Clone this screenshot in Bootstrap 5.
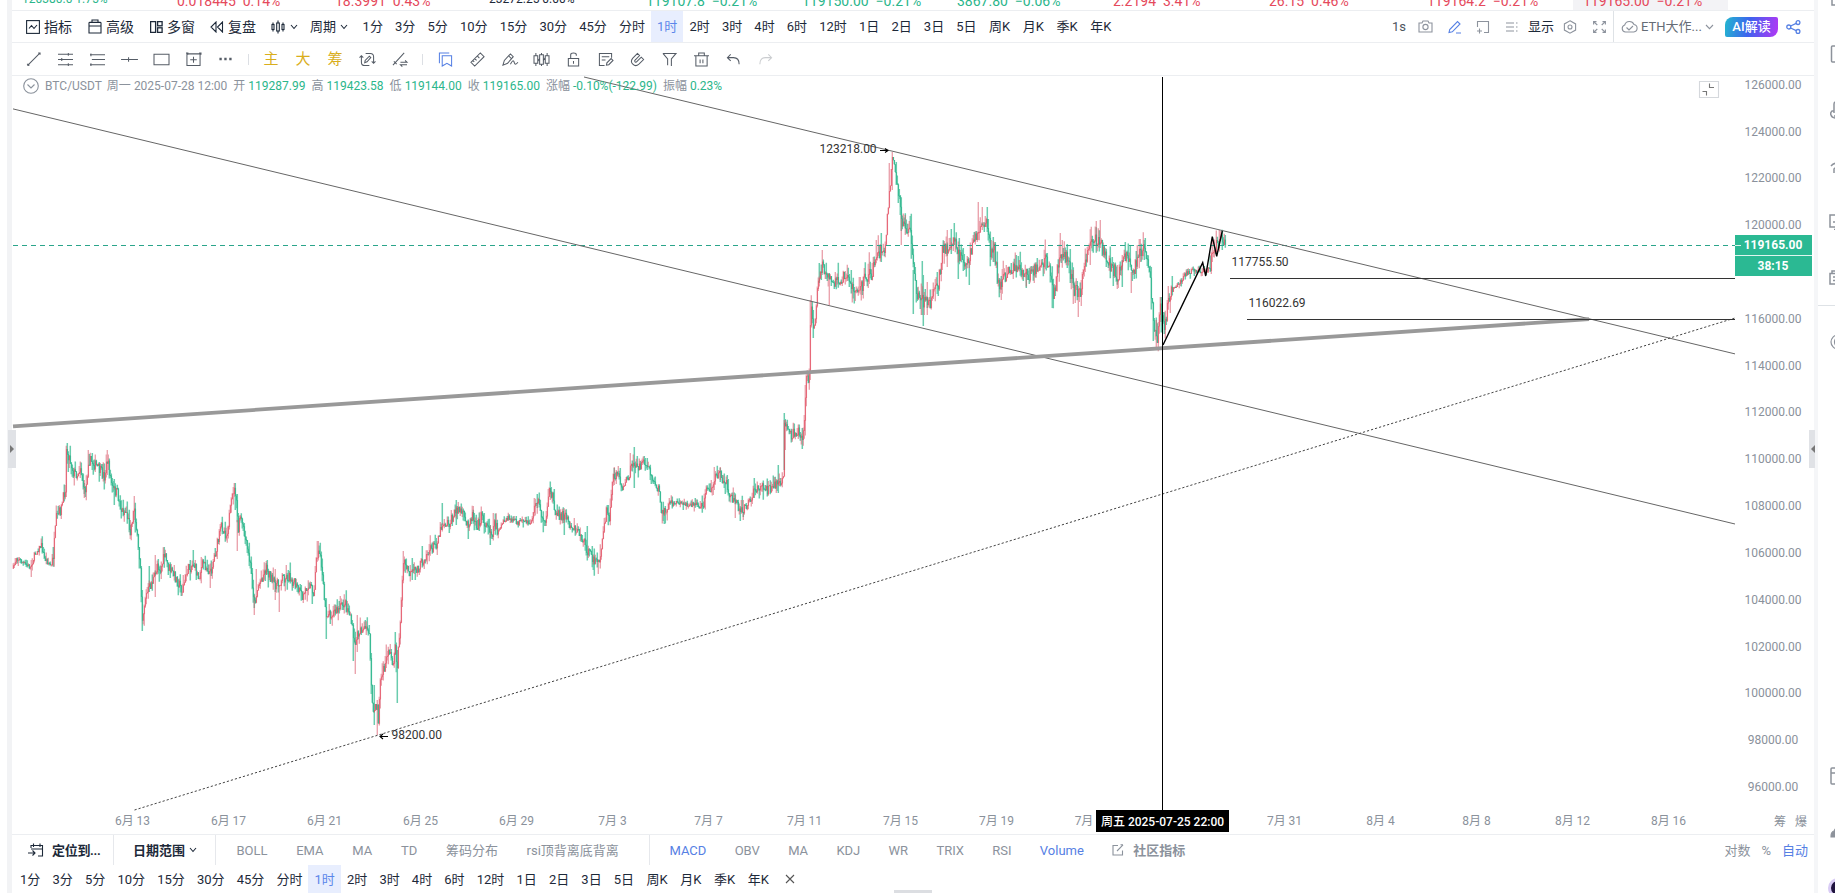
<!DOCTYPE html>
<html lang="zh-CN">
<head>
    <meta charset="UTF-8">
    <meta name="viewport" content="width=device-width, initial-scale=1.0">
    <title>BTC/USDT 1时</title>
    <link href="https://cdn.jsdelivr.net/npm/bootstrap@5.3.0/dist/css/bootstrap.min.css" rel="stylesheet">
    <style>
        body { width: 1835px; height: 893px; overflow: hidden; font-family: Roboto, "Noto Sans CJK SC", sans-serif; font-size: 13px; line-height: 1; color: #1d2939; background: #fff; }
        svg { flex: none; fill: none; stroke: currentColor; display: block; }
        body { stroke-width: 1.1; }
        .gutter { width: 12px; border-left: 7px solid #fff; background: #f2f3f5; }
        .main-pane { width: 1802px; flex: none; }
        .main-pane > div { flex: none; }
        .right-strip { width: 4px; background: #f5f6f8; }
        .side-bar { width: 17px; color: #8d929b; }
        .line-b { border-bottom: 1px solid #eceef1; }
        .up { color: #e5495c; }
        .down { color: #2bb68b; }
        .muted { color: #8b929c; }
        .blue { color: #5680e4; }

        .ticker { height: 11px; overflow: hidden; padding-left: 10px; }
        .ticker span { flex: none; font-size: 14px; line-height: 14px; margin-top: -6px; white-space: pre; }
        .ticker .tiny { font-size: 12px; margin-top: -8px; }
        .ticker .picked { background: #f3f3f6; margin-left: -10px; padding-left: 10px; height: 17px; }

        .bar-top { height: 32px; }
        .bar-top .tool { font-size: 14px; }
        .period { height: 100%; padding: 0 6.07px; }
        .period.wide { padding: 0 6.3px; }
        .period.on { background: #e8eefe; color: #5b86ea; }
        .tool-gray { color: #8d939d; }
        .ai-btn { width: 53px; height: 20px; border-radius: 8px 2px 8px 2px; color: #fff; font-weight: 500; background: linear-gradient(100deg, #22b7cf, #3d63ee 45%, #b436f5); }
        .bar-draw { height: 33px; padding-left: 5px; color: #555c66; }
        .bar-draw .cell { width: 32px; }
        .bar-draw .split { width: 14px; }
        .bar-draw .split::after { content: ""; display: block; width: 1px; height: 11px; background: #dcdfe4; }
        .bar-draw .gold { color: #d9ae1c; font-size: 15px; }

        .chart-box { height: 759px; }
        .info { left: 11px; top: 2px; font-size: 12px; height: 16px; }
        .info .down { margin: 0 6px 0 3px; }
        .handle { width: 8px; height: 38px; background: #e0e2e6; color: #777; top: 354px; }
        .handle svg { fill: currentColor; stroke: none; }
        .handle.start { left: -4px; }
        .handle.end { right: -1px; width: 6px; }
        .handle-bottom { left: 894px; top: 890px; width: 38px; height: 4px; background: #dcdee2; }
        .bar-ind { height: 30px; }
        .bar-ind .box { border-right: 1px solid #e6e8ec; height: 100%; }
        .bar-period { height: 28px; padding-left: 2px; }
        .side-bar .slot { height: 56px; padding-left: 12px; overflow: hidden; }

        .axis text { font-size: 12px; fill: #8a919b; stroke: none; text-anchor: middle; }
        .plain text { font-size: 12px; fill: #333; stroke: none; }
    </style>
</head>
<body class="d-flex">
    <div class="gutter flex-shrink-0"></div>

    <main class="main-pane d-flex flex-column">
        <div class="ticker line-b d-flex" id="ticker"></div>

        <div class="bar-top line-b d-flex align-items-center">
            <div class="tool d-flex align-items-center" style="margin-left:14px">
                <svg width="14" height="14" viewBox="0 0 14 14"><rect x=".6" y=".6" width="12.8" height="12.8"/><path d="M3 8.500 5.500 5.500 8 8.500 11 5"/></svg>
                <span class="ms-1">指标</span>
            </div>
            <div class="tool d-flex align-items-center" style="margin-left:16px">
                <svg width="14" height="15" viewBox="0 0 14 15"><path d="M4 3.500V1H10V3.500M1 4Q1 3.400 2 3.400H12Q13 3.400 13 4V14H1ZM1 7H13"/></svg>
                <span style="margin-left:4px">高级</span>
            </div>
            <div class="tool d-flex align-items-center" style="margin-left:16px">
                <svg width="13" height="12" viewBox="0 0 13 12" stroke-width="1.300"><rect x=".6" y=".6" width="5" height="10.800"/><rect x="7.600" y=".6" width="4.500" height="4.200"/><rect x="7.600" y="6.800" width="4.500" height="4.600"/></svg>
                <span style="margin-left:4px">多窗</span>
            </div>
            <div class="tool d-flex align-items-center" style="margin-left:15px">
                <svg width="14" height="12" viewBox="0 0 14 12"><path d="M6 1V11L1 6ZM12.500 1V11L7.500 6Z"/></svg>
                <span class="ms-1">复盘</span>
            </div>
            <svg width="14" height="14" viewBox="0 0 14 14" style="margin-left:15px"><path d="M2 2.500V11.500M7 .5V13.500M12 2.500V11.500"/><rect x="1" y="4.500" width="2" height="5" fill="#fff"/><rect x="5.700" y="3" width="2.600" height="8" fill="#fff"/><rect x="11" y="4.500" width="2" height="5" fill="#fff"/></svg>
            <svg width="8" height="6" viewBox="0 0 8 6" style="margin-left:5px"><path d="M1 1 4 4.500 7 1"/></svg>
            <span style="margin-left:12px">周期</span>
            <svg width="8" height="6" viewBox="0 0 8 6" class="ms-1"><path d="M1 1 4 4.500 7 1"/></svg>
            <div class="d-flex h-100 periods" style="margin-left:8.500px"></div>

            <div class="d-flex align-items-center ms-auto h-100 tool-gray">
                <span style="color:#4d545e">1s</span>
                <svg width="15" height="13" viewBox="0 0 15 13" style="margin-left:12px"><path d="M1 3H4L5 1H10L11 3H14V12H1Z"/><circle cx="7.500" cy="7" r="2.600"/></svg>
                <svg class="blue" width="14" height="14" viewBox="0 0 14 14" style="margin-left:15px"><path d="M1 12.500 1.700 9.500 9.500 1.500 12 4 4.300 11.800ZM8 13H13"/></svg>
                <svg width="14" height="14" viewBox="0 0 14 14" style="margin-left:14px"><path d="M1.500 7V1.500H12.500V12.500H8M3.500 8.500V13.500M1 11H6"/></svg>
                <svg width="13" height="10" viewBox="0 0 13 10" style="margin-left:16px"><path d="M0 1H8M0 5H8M0 9H8"/><path d="M10 1H12.500M10 5H12.500M10 9H12.500" stroke-dasharray="1.500 1"/></svg>
                <span style="margin:0 9px 0 9px;color:#1d2939">显示</span>
                <svg width="14" height="14" viewBox="0 0 14 14"><path d="M7 .8 12.600 3.900V10.100L7 13.200 1.400 10.100V3.900Z"/><circle cx="7" cy="7" r="2"/></svg>
                <svg width="13" height="12" viewBox="0 0 13 12" style="margin-left:16px"><path d="M.6 3.500V.6H3.500M.6.6 4.300 4M9.500.6H12.400V3.500M12.400.6 8.700 4M.6 8.500V11.400H3.500M.6 11.400 4.300 8M12.400 8.500V11.400H9.500M12.400 11.400 8.700 8"/></svg>
                <div class="h-100 border-start d-flex align-items-center" style="margin-left:7px;padding-left:7px">
                    <svg width="17" height="13" viewBox="0 0 17 13"><path d="M4.500 12A3.600 3.600 0 0 1 3.700 5 5 5 0 0 1 13 4.500 3.800 3.800 0 0 1 12.800 12ZM5.500 7.500 8 10 12 6"/></svg>
                    <span style="margin-left:3px;width:60px;color:#656c76;white-space:nowrap">ETH大作...</span>
                </div>
                <svg width="9" height="6" viewBox="0 0 9 6" style="margin-left:4px"><path d="M1 1 4.500 4.700 8 1"/></svg>
                <div class="ai-btn d-flex align-items-center justify-content-center" style="margin-left:11px">AI解读</div>
                <svg class="blue" width="15" height="14" viewBox="0 0 15 14" style="margin:0 13px 0 8px" stroke-width="1.300"><circle cx="2.800" cy="7" r="2"/><circle cx="12" cy="2.600" r="1.900"/><circle cx="12" cy="11.400" r="1.900"/><path d="M4.600 6 10.200 3.400M4.600 8 10.200 10.600"/></svg>
            </div>
        </div>

        <div class="bar-draw line-b d-flex align-items-center" id="drawTools"></div>

        <div class="chart-box line-b position-relative">
            <svg width="1802" height="758" viewBox="12 76 1802 758" id="chart">
                <g id="candles"></g>
                <path d="M13 245.500H1735" stroke="#2ba58b" stroke-dasharray="5 4"/>
                <path d="M584 77 1735 353.900M13 108.900 1735 524" stroke="#666" stroke-width="1"/>
                <path d="M13 426.300 1589 319.200" stroke="#999" stroke-width="3.800"/>
                <path d="M134.500 810 1735 318" stroke="#444" stroke-width="1" stroke-dasharray="2.200 2"/>
                <path d="M1230 278.500H1735M1247 319.500H1735" stroke="#333" stroke-width="1"/>
                <path d="M1162.500 77V810" stroke="#000" stroke-width="1"/>
                <path d="M1163 345 1202.700 262.700 1205.700 276 1212.300 236.700 1216.700 256.300 1222.300 231" stroke="#000" stroke-width="1.400"/>
                <path d="M880 150.500H888M885 148.500 888 150.500 885 152.500M388 736.500H380M383 734 380 736.500 383 739" stroke="#000"/>
                <g class="plain">
                    <text x="819.500" y="153">123218.00</text>
                    <text x="391.500" y="739">98200.00</text>
                    <text x="1231.500" y="266">117755.50</text>
                    <text x="1248.500" y="307">116022.69</text>
                </g>
                <g class="axis" id="axis"></g>
                <rect x="1735" y="235" width="77" height="41" fill="#2bb993" stroke="none"/>
                <path d="M1735 255.500H1812M1735 245.500H1741" stroke="#dff5ee" stroke-width="1"/>
                <g font-weight="700" font-size="12" fill="#fff" stroke="none" text-anchor="middle">
                    <text x="1773" y="249">119165.00</text>
                    <text x="1773" y="270">38:15</text>
                </g>
                <rect x="1096" y="810" width="133" height="22" fill="#000" stroke="none"/>
                <text x="1162.500" y="825.500" font-size="12" font-weight="500" fill="#fff" stroke="none" text-anchor="middle">周五 2025-07-25 22:00</text>
                <path d="M1699.500 81.500H1718.500V97.500H1699.500Z" stroke="#d5d8dc"/>
                <path d="M1709.500 83.500V87.500H1714M1702.500 91.500H1706.500V95.500" stroke="#777"/>
            </svg>
            <div class="info position-absolute d-flex align-items-center muted text-nowrap">
                <svg width="16" height="16" viewBox="0 0 16 16"><circle cx="8" cy="8" r="7.300"/><path d="M4.500 6.500 8 10 11.500 6.500"/></svg>
                <span style="margin:0 5px 0 6px">BTC/USDT</span><span style="margin-right:3px">周一</span><span style="margin-right:6px">2025-07-28 12:00</span>
                <span>开</span><span class="down">119287.99</span>
                <span>高</span><span class="down">119423.58</span>
                <span>低</span><span class="down">119144.00</span>
                <span>收</span><span class="down">119165.00</span>
                <span>涨幅</span><span class="down">-0.10%(-122.99)</span>
                <span>振幅</span><span class="down">0.23%</span>
            </div>
            <div class="handle start position-absolute d-flex align-items-center justify-content-end"><svg width="6" height="8" viewBox="0 0 6 8"><path d="M0 0 4 4 0 8Z"/></svg></div>
            <div class="handle end position-absolute d-flex align-items-center justify-content-end"><svg width="5" height="8" viewBox="0 0 5 8"><path d="M5 0 1 4 5 8Z"/></svg></div>
        </div>

        <div class="bar-ind d-flex align-items-center muted text-nowrap">
            <div class="box d-flex align-items-center fw-bold" style="width:102px;padding-left:16px;color:#1d2939">
                <svg width="16" height="14" viewBox="0 0 16 14"><path d="M3 5V2.500H14.500V13H10M5.500.5V4M12 .5V4M3 6H14.500M0 10H7M4.500 7.500 7 10 4.500 12.500"/></svg>
                <span style="margin-left:8px;letter-spacing:-.3px">定位到...</span>
            </div>
            <div class="box d-flex align-items-center fw-bold" style="width:102px;padding-left:19px;color:#1d2939">
                日期范围<svg width="8" height="6" viewBox="0 0 8 6" style="margin-left:4px"><path d="M1 1 4 4.500 7 1"/></svg>
            </div>
            <div class="box d-flex align-items-center" style="width:434px;padding-left:20.500px;gap:28.700px">
                <span>BOLL</span><span>EMA</span><span>MA</span><span>TD</span><span>筹码分布</span><span>rsi顶背离底背离</span>
            </div>
            <div class="d-flex align-items-center" style="padding-left:19.500px;gap:28.300px">
                <span class="blue">MACD</span><span>OBV</span><span>MA</span><span>KDJ</span><span>WR</span><span>TRIX</span><span>RSI</span><span class="blue">Volume</span>
                <div class="d-flex align-items-center fw-bold">
                    <svg width="12" height="12" viewBox="0 0 12 12"><path d="M6 1.500H1V11H10.500V6.500M5 7 11 .8M8.500.8H11"/></svg>
                    <span style="margin-left:9px">社区指标</span>
                </div>
            </div>
            <div class="d-flex ms-auto" style="gap:11px;padding-right:6px"><span>对数</span><span>%</span><span class="blue">自动</span></div>
        </div>

        <div class="bar-period d-flex align-items-center">
            <div class="d-flex h-100 periods"></div>
            <svg width="10" height="10" viewBox="0 0 10 10" style="margin-left:10px;color:#555"><path d="M1 1 9 9M9 1 1 9"/></svg>
        </div>
    </main>

    <div class="right-strip flex-shrink-0"></div>
    <aside class="side-bar d-flex flex-column flex-shrink-0 overflow-hidden">
        <div class="flex-shrink-0" style="height:26px;padding-left:13px"><svg width="18" height="6" viewBox="0 0 18 6" stroke-width="1.500"><path d="M1 0V5H18"/></svg></div>
        <div class="slot d-flex align-items-center flex-shrink-0"><svg width="18" height="18" viewBox="0 0 18 18" stroke-width="1.500"><rect x="1.500" y="1" width="16" height="16" rx="1"/></svg></div>
        <div class="slot d-flex align-items-center flex-shrink-0"><svg width="18" height="18" viewBox="0 0 18 18" stroke-width="1.500"><path d="M4 12V3Q4 1 6 1H16M4 10H2Q0 12 1 14 2 17 6 17H16M4 15H16"/></svg></div>
        <div class="slot d-flex align-items-center flex-shrink-0 pt-1"><svg width="18" height="12" viewBox="0 0 18 12" stroke-width="1.500"><path d="M1 4Q5-1 12 3M4 11V7Q7 4 12 7"/></svg></div>
        <div class="slot d-flex align-items-center flex-shrink-0" style="padding-left:11px"><svg width="18" height="16" viewBox="0 0 18 16" stroke-width="1.500"><path d="M17 1H1V13H17M5 15.500H14M5 9V7M8 10V5"/></svg></div>
        <div class="slot d-flex align-items-center flex-shrink-0 border-bottom" style="padding-left:11px"><svg width="18" height="15" viewBox="0 0 18 15" stroke-width="1.500"><path d="M3 3V1H17M1 3.500H17V14H1ZM4 7H14M4 10.500H14"/></svg></div>
        <div class="slot d-flex align-items-center flex-shrink-0" style="height:72px"><svg width="16" height="16" viewBox="0 0 16 16" stroke-width="1.200"><circle cx="8" cy="8" r="7"/><path d="M6 4Q3 8 6 12"/></svg></div>
        <div class="slot d-flex align-items-center mt-auto flex-shrink-0"><svg width="18" height="18" viewBox="0 0 18 18" stroke-width="1.500"><rect x="1" y="1" width="16" height="16" rx="1"/><path d="M1 6H17M6 6V17"/></svg></div>
        <div class="slot d-flex align-items-center flex-shrink-0"><svg width="16" height="14" viewBox="0 0 16 14"><path d="M1 11Q1 7 4 6L7 1V12H1Z" fill="currentColor"/></svg></div>
        <div class="flex-shrink-0" style="height:33px;padding:18px 0 0 10px"><svg width="20" height="20" viewBox="0 0 20 20"><circle cx="10" cy="10" r="8.500" fill="#20143f" stroke="#d9ccf5" stroke-width="3"/></svg></div>
    </aside>
    <div class="handle-bottom position-absolute"></div>

    <script src="https://cdn.jsdelivr.net/npm/bootstrap@5.3.0/dist/js/bootstrap.bundle.min.js"></script>
    <script>
        // quotes: left edge, text, colour class
        const quotes = [
            [22, '120380.0 1.75%', 'tiny down'], [177, '0.018445  0.14%', 'up'], [335, '18.3991  0.43%', 'up'],
            [489, '23272.25 0.00%', 'tiny'], [646, '119107.8  −0.21%', 'down'], [802, '119150.00  −0.21%', 'down'],
            [957, '3867.80  −0.06%', 'down'], [1113, '2.2194  3.41%', 'up'], [1269, '26.15  0.46%', 'up'],
            [1427, '119164.2  −0.21%', 'up'], [1583, '119165.00  −0.21%', 'up picked'], [1728, '', '']
        ];
        document.getElementById('ticker').innerHTML = quotes.slice(0, -1).map((q, i) => {
            let w = quotes[i + 1][0] - q[0] + (q[2].includes('picked') ? 10 : 0);
            return `<span class="${q[2]}" style="width:${w}px">${q[1]}</span>`;
        }).join('');

        const periods = '1分 3分 5分 10分 15分 30分 45分 分时 1时 2时 3时 4时 6时 12时 1日 2日 3日 5日 周K 月K 季K 年K'.split(' ');
        document.querySelectorAll('.periods').forEach(el => {
            el.innerHTML = periods.map(p => `<span class="period d-flex align-items-center ${p === '1时' ? 'on' : ''} ${p.endsWith('K') ? 'wide' : ''}">${p}</span>`).join('');
        });

        // drawing tools, 16x16 paths; '|' is a separator
        const tools = [
            'M1.500 14.500 14.500 1.500M1 13H3V15M13 1H15V3',
            'M0 2.500H16M0 8H16M0 13.500H16M11 1V4M4 6.500V9.500M11 12V15',
            'M0 3H16M2 8H16M0 13.500H16M1 1.500V4.500M1 12V15',
            'M-1 8H17M7 5.500V10.500',
            'M0 2.500H16V13.500H0Z',
            'M1 2H15V14.500H1ZM8 5V11.500M4.500 8.200H11.500M0 1H2V3M14 1H16V3',
            'dots', '|', '主', '大', '筹',
            'M6 1.500H11Q14.500 1.500 14.500 5V11.500M10 14.500H5Q1.500 14.500 1.500 11V4.500M5 11.500 5.500 9 10 4.500 11.500 6 7.500 10.500ZM12.500 10 14.500 12 16.500 10M-.5 6 1.500 4 3.500 6',
            'M1 14 13 1M2 10 5 13M9 11H16L14 9M16 13.500H9L11 15.500',
            '|',
            'bookmark',
            'M1 11 11 1 15 5 5 15ZM5 7 7 9M8 4.500 10 6.500M3 9 4.500 10.500',
            'M1 14 2.500 9 9 2 12 5 6 12ZM7 4 10 7M9 13Q12 7 13 11T17 11',
            'M2 1V4M2 12V15M8 1V3M8 13V15M14 1V4M14 12V15M0 4H4V12H0ZM6 3H10V13H6ZM12 4H16V12H12ZM4 10 6 7M10 9 12 6',
            'M2.500 7H13.500V15H2.500ZM5 7V3Q5 1 8 1T11 3V4M8 9.500V12.500',
            'M14.500 6V1.500H1.500V14.500H7M4 5H12M4 8.500H8M9 14 9.500 11.500 14 7 16 9 11.500 13.500Z',
            'M8 1.500 3 6.500Q0 10 3 13T9.500 13L14.500 8 12 5.500 7.500 10Q6 11.500 5.200 10.300T6 8L10.200 3.800Z',
            'M1 1.500H15L10 7.500V15M6 14V7.500L1 1.500',
            'M0 4H16M5 4V1H11V4M2 4V15H14V4M6.500 8V12M9.500 8V12',
            'M5 2.500 1.500 6 5 9.500M1.500 6H8Q14 6 14 13',
            'faded'
        ];
        document.getElementById('drawTools').innerHTML = tools.map(t => {
            if (t === '|') return '<div class="split d-flex justify-content-center"></div>';
            let inner, cls = '';
            if (t.length === 1) { inner = t; cls = 'gold'; }
            else {
                let d = t, attr = '';
                if (t === 'dots') { d = 'M1.500 7.500H4M6.700 7.500H9.200M12 7.500H14.500'; attr = 'stroke-width="2.500"'; }
                if (t === 'bookmark') { d = 'M4.500 4H14.500V15L9.500 12 4.500 15ZM1.500 12V1H12'; cls = 'blue'; }
                if (t === 'faded') { d = 'M11 2.500 14.500 6 11 9.500M14.500 6H8Q2 6 2 13'; attr = 'opacity=".3"'; }
                inner = `<svg width="15" height="15" viewBox="0 0 16 16" overflow="visible" ${attr}><path d="${d}"/></svg>`;
            }
            return `<div class="cell d-flex justify-content-center ${cls}">${inner}</div>`;
        }).join('');

        // axis labels
        let labels = '';
        for (let i = 0; i <= 15; i++) {
            let price = 126000 - i * 2000;
            if (price === 118000) continue;
            labels += `<text x="1773" y="${88.7 + i * 46.82}">${price}.00</text>`;
        }
        ['6月 13', '6月 17', '6月 21', '6月 25', '6月 29', '7月 3', '7月 7', '7月 11', '7月 15', '7月 19', '', '', '7月 31', '8月 4', '8月 8', '8月 12', '8月 16']
            .forEach((t, i) => labels += t && `<text x="${132.5 + i * 96}" y="825">${t}</text>`);
        labels += '<text x="1084" y="825">7月</text><text x="1780" y="825.5">筹</text><text x="1801" y="825.5">爆</text>';
        document.getElementById('axis').innerHTML = labels;

        // hourly price path, x,y pairs, one candle per pixel
        const route = `13,568 16,557 24,564 30,567 35,553 41,545 44,558 51,566 53,555 56,518 61,508 65,487 66,450 69,457 73,472 77,474 80,466 84,492 86,485 88,460 92,462 97,467 104,476 107,460 112,488 117,493 121,510 126,512 130,530 134,507 138,550 140,565 142,618 145,597 150,585 155,575 157,563 160,570 164,555 168,567 175,577 182,590 187,570 193,563 198,577 203,562 210,573 213,560 218,540 221,525 226,535 230,510 233,490 235,492 238,530 240,516 245,540 250,565 254,603 258,585 266,567 272,582 278,585 282,577 290,577 298,590 302,597 308,583 314,592 316,555 320,553 324,600 326,613 330,613 338,610 344,602 350,615 354,645 357,635 360,628 364,630 369,630 371,690 373,712 377,705 378,720 380,680 385,665 388,647 392,663 395,650 397,665 400,620 403,563 405,565 410,575 415,570 420,565 425,555 430,550 436,543 442,523 450,522 457,508 462,513 466,525 472,515 477,525 481,517 485,524 492,532 494,522 497,530 503,523 508,518 516,522 522,522 530,523 535,505 537,498 541,515 546,520 549,492 552,495 556,515 565,515 570,525 577,530 585,545 589,555 595,560 598,565 602,540 606,512 609,518 613,475 617,473 622,487 625,485 630,470 635,463 640,468 645,462 650,473 655,485 658,487 661,510 664,512 668,503 680,503 690,504 700,505 703,507 706,483 710,492 715,477 720,475 725,482 730,495 737,505 743,508 750,500 757,485 765,488 770,490 777,482 783,477 784,425 787,430 792,435 797,430 802,438 803,430 806,380 809,375 810,320 811,310 813,325 816,310 818,275 822,268 827,280 832,282 838,280 847,272 852,290 860,288 866,276 871,275 876,255 885,248 889,192 892,158 896,180 900,200 902,225 905,228 910,235 913,270 916,295 920,301 924,300 929,305 934,288 938,285 942,252 950,245 954,238 958,255 966,265 972,247 979,228 986,220 990,250 994,250 998,285 1004,278 1010,268 1020,270 1027,276 1035,270 1045,261 1050,270 1053,297 1058,265 1062,253 1068,260 1073,290 1080,290 1084,265 1090,245 1097,238 1103,250 1108,262 1117,275 1122,265 1127,250 1132,275 1138,257 1143,250 1149,270 1153,320 1157,337 1160,310 1164,333 1168,300 1172,287 1178,285 1184,275 1192,270 1200,270 1210,268 1212,250 1218,245 1220,235 1225,245`
            .split(/\s+/).map(p => p.split(',').map(Number));
        // long wicks: x, high, low, 1 = rising
        const spikes = [[31,560,577,1],[66,447,480,1],[84,480,498,1],[88,450,478,1],[92,453,470,0],[107,450,475,1],[114,479,505,0],[134,496,520,1],[130,520,539,1],[142,590,631,0],[149,566,592,0],[155,555,597,1],[164,547,563,0],[183,575,593,1],[193,550,567,0],[210,565,588,1],[235,483,510,0],[237,520,551,1],[254,595,615,1],[256,569,596,1],[266,563,575,0],[275,569,600,1],[279,585,612,1],[289,571,582,0],[317,541,560,1],[326,600,639,0],[355,640,674,1],[357,615,648,1],[353,626,661,0],[374,685,725,0],[377,700,735,1],[397,650,703,0],[395,632,655,0],[403,551,580,1],[412,558,580,0],[422,546,564,0],[442,503,525,0],[456,500,525,0],[468,520,539,0],[473,506,520,1],[490,525,545,0],[493,513,540,1],[537,494,508,0],[550,488,500,1],[564,515,535,0],[587,526,560,0],[593,560,570,0],[598,560,574,1],[614,467,485,1],[630,453,470,1],[634,447,488,0],[664,508,524,0],[714,467,490,1],[720,467,480,1],[735,495,518,1],[743,500,520,1],[754,478,498,0],[778,465,493,0],[784,413,470,0],[785,420,450,1],[802,435,449,0],[810,300,380,1],[813,310,338,0],[822,252,275,1],[819,263,283,0],[829,275,305,1],[876,240,262,1],[881,238,262,0],[889,163,200,1],[892,152,190,1],[896,162,185,0],[901,215,245,1],[905,215,235,1],[913,270,314,0],[922,261,315,0],[923,275,326,0],[927,282,315,1],[947,230,267,1],[951,229,254,0],[954,223,245,0],[958,250,279,0],[969,262,285,0],[978,202,240,1],[982,207,230,1],[987,207,232,0],[993,237,262,0],[1001,280,300,1],[1026,272,288,0],[1045,252,265,1],[1052,288,308,0],[1060,233,260,1],[1067,245,268,0],[1073,270,304,1],[1078,286,317,1],[1081,280,306,1],[1090,236,265,1],[1096,221,245,1],[1100,220,245,1],[1113,262,286,0],[1117,265,289,1],[1122,260,287,0],[1131,272,293,1],[1140,239,262,1],[1144,240,260,0],[1153,310,341,0],[1156,320,347,1],[1160,301,322,1],[1212,240,262,1],[1219,230,250,1],[1222,231,250,0]];
        let seed = 7;
        const rnd = () => (seed = (seed * 16807) % 2147483647) / 2147483647;
        let wick = ['', ''], body = ['', ''], prev = 568, k = 0;
        for (let x = 13; x <= 1225; x++) {
            while (k < route.length - 2 && x > route[k + 1][0]) k++;
            let [x0, y0] = route[k], [x1, y1] = route[k + 1];
            // quiet stretches have shorter candles
            let calm = (x > 498 && x < 532) || (x > 667 && x < 702) || (x > 1172 && x < 1210) || x < 52;
            let amp = calm ? 7 : x > 800 ? 17 : 13;
            let y = y0 + (y1 - y0) * (x - x0) / (x1 - x0) + (rnd() - 0.5) * amp * .8;
            let c = y < prev ? 1 : 0;
            let hi = Math.min(y, prev) - rnd() * rnd() * amp, lo = Math.max(y, prev) + rnd() * rnd() * amp;
            if (y1 > 690 || y1 < 200) { hi = Math.min(y, prev); lo = Math.max(y, prev); }
            wick[c] += `M${x + .3} ${hi.toFixed(1)}V${lo.toFixed(1)}`;
            body[c] += `M${x + .5} ${Math.min(y, prev).toFixed(1)}V${(Math.max(y, prev) + .6).toFixed(1)}`;
            prev = y;
        }
        spikes.forEach(s => wick[s[3]] += `M${s[0] + .3} ${s[1]}V${s[2]}`);
        const paint = (d, color, w, o) => `<path d="${d}" stroke="${color}" stroke-width="${w}" opacity="${o}"/>`;
        document.getElementById('candles').innerHTML =
            paint(wick[0], '#2bb68b', 1.5, .7) + paint(wick[1], '#d9596c', 1.4, .55) +
            paint(body[0], '#2bb68b', 1.1, .75) + paint(body[1], '#e5495c', 1.1, .65);
    </script>
</body>
</html>
